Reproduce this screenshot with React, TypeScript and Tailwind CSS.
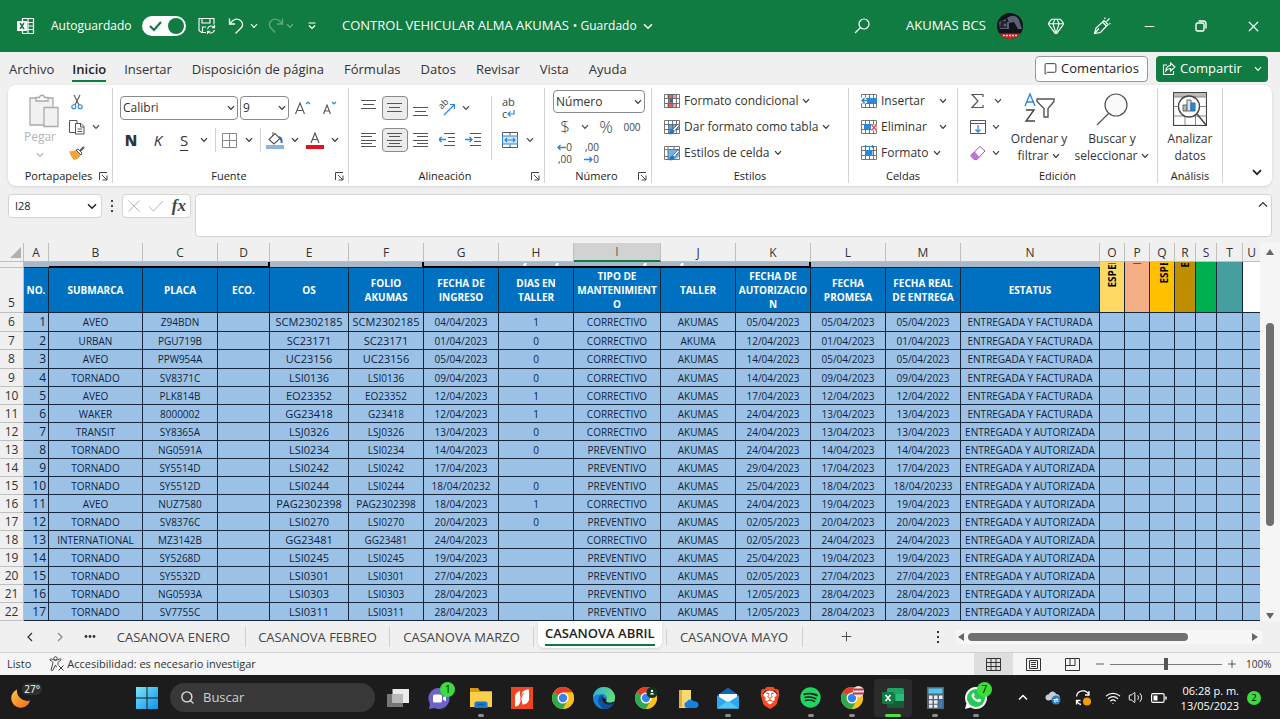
import React from "react";
import {
  Gem,
  Search,
  Wifi,
  Volume2,
  X,
  Minus,
  Plus,
  MessageSquare,
} from "lucide-react";
import { SiBrave } from "react-icons/si";
import { FaSpotify } from "react-icons/fa";

type Kids = { children?: React.ReactNode };

function Chev({ className = "" }: { className?: string }) {
  return (
    <svg viewBox="0 0 8 6" className={`h-1.5 w-2 shrink-0 ${className}`} fill="none" stroke="currentColor" strokeWidth="1.2">
      <path d="M1 1.2 4 4.4 7 1.2" />
    </svg>
  );
}

function Btn({ label, className = "", children }: Kids & { label: string; className?: string }) {
  return (
    <button type="button" aria-label={label} className={`flex shrink-0 items-center justify-center ${className}`}>
      {children}
    </button>
  );
}

/* ---------- title bar ---------- */

function TitleBar() {
  return (
    <header className="flex h-[52px] items-center bg-[#107c41] text-[12px] text-white">
      <svg viewBox="0 0 18 18" className="ml-[17px] size-[18px] shrink-0" fill="none" stroke="#fff">
        <path d="M5.5 4V1.5h11v15h-11V14M11 1.5v15M5.5 5.5h11M11 9h5.5M5.5 12.5h11" strokeWidth="1.2" />
        <rect x="0" y="4" width="10" height="10" fill="#fff" stroke="none" />
        <path d="m3 6 4 6M7 6l-4 6" stroke="#107c41" strokeWidth="1.5" />
      </svg>
      <label htmlFor="autosave" className="ml-4 w-[91px] whitespace-nowrap">Autoguardado</label>
      <span className="relative h-5 w-11 shrink-0 rounded-full bg-white">
        <input id="autosave" type="checkbox" defaultChecked className="absolute inset-0 m-0 size-full cursor-pointer appearance-none rounded-full" />
        <svg viewBox="0 0 44 20" className="pointer-events-none absolute inset-0 h-5 w-11" fill="none">
          <path d="m8 10 4 4 7-8" stroke="#107c41" strokeWidth="2.2" />
          <circle cx="34" cy="10" r="8" fill="#107c41" />
        </svg>
      </span>
      <Btn label="Guardar" className="ml-3 w-[18px]">
        <svg viewBox="0 0 18 18" className="size-[18px]" fill="none" stroke="#fff" strokeWidth="1.1">
          <path d="M8 15.5H3.500L1 13.500V1.500h15v6M4 1.500V6h8V1.500M4.500 15.500V10H8" />
          <path d="M9.500 12a4 4 0 0 1 7-1.500M16.500 8v2.800h-2.800M16.500 13a4 4 0 0 1-7 1.500M9.500 17v-2.800h2.800" />
        </svg>
      </Btn>
      <Btn label="Deshacer" className="ml-3 w-4">
        <svg viewBox="0 0 16 18" className="h-[18px] w-4" fill="none" stroke="#fff" strokeWidth="1.3">
          <path d="M1.500 1.500V7H7M1.800 6.800C6 1.500 10 1.600 12.500 3.500c2.800 2.200 2.500 5.500.5 7.500l-5.500 5.500" />
        </svg>
      </Btn>
      <Btn label="Opciones de deshacer" className="ml-1 w-3"><Chev /></Btn>
      <Btn label="Rehacer" className="ml-2 w-4 opacity-35">
        <svg viewBox="0 0 16 18" className="h-[18px] w-4" fill="none" stroke="#fff" strokeWidth="1.3">
          <path d="M14.500 1.500V7H9M14.200 6.800C10 1.500 6 1.600 3.500 3.500.7 5.700 1 9 3 11l4 4.500" />
        </svg>
      </Btn>
      <Btn label="Opciones de rehacer" className="w-3 opacity-40"><Chev /></Btn>
      <Btn label="Personalizar barra" className="ml-1.5 w-5">
        <svg viewBox="0 0 10 8" className="h-2 w-2.5" fill="none" stroke="#fff" strokeWidth="1.2">
          <path d="M1.500 1h7M2 3.500l3 3 3-3" />
        </svg>
      </Btn>
      <button type="button" className="ml-5 flex items-center whitespace-nowrap">
        <span className="text-[13px]">CONTROL VEHICULAR ALMA AKUMAS</span>
        <span className="ml-1">• Guardado</span>
        <svg viewBox="0 0 10 7" className="ml-1.5 h-[7px] w-2.5" fill="none" stroke="currentColor" strokeWidth="1.6"><path d="M1 1.200 5 5.200 9 1.200" /></svg>
      </button>
      <div className="ml-auto flex items-center">
        <Btn label="Buscar" className="w-4">
          <svg viewBox="0 0 16 16" className="size-4" fill="none" stroke="#fff" strokeWidth="1.2">
            <circle cx="10" cy="6" r="5" /><path d="M6.300 9.800 1 15" />
          </svg>
        </Btn>
        <span className="ml-9 w-[91px] whitespace-nowrap text-[13px]">AKUMAS BCS</span>
        <svg viewBox="0 0 26 26" className="size-[26px]">
          <defs><clipPath id="av"><circle cx="13" cy="13" r="13" /></clipPath></defs>
          <g clipPath="url(#av)">
            <rect width="26" height="26" fill="#11131c" />
            <path d="M2 9 9 6v3h3v7H3zM10 5c6-4 10-2 12 2l3 9h-4l-4-7-5 1z" fill="#5d5f73" />
            <path d="M4 8h6v7H3z" fill="#23242f" />
            <circle cx="8" cy="12" r="1.500" fill="#5d5f73" />
            <rect y="20.500" width="26" height="6" fill="#c4262b" />
            <path d="M6 22.500h14" stroke="#f4d9d9" strokeWidth="1.500" strokeDasharray="2 1" />
          </g>
        </svg>
        <Btn label="Premium" className="ml-6 w-[18px]"><Gem size={18} strokeWidth={1.5} /></Btn>
        <Btn label="Dibujar" className="ml-7 w-[18px]">
          <svg viewBox="0 0 18 18" className="size-[18px]" fill="none" stroke="#fff" strokeWidth="1.2">
            <path d="M1.500 16.500 3 11l6.500-6 4 4-6 6.500zM1.500 16.500l4.500-5M9.500 5l1.500-1.500 4 4L13.500 9M11.500 2l.8-1.500M13.500 4.500l3-3M16 7l1.500-.5" />
          </svg>
        </Btn>
        <Btn label="Minimizar" className="ml-[26px] w-6"><Minus size={15} strokeWidth={1.6} /></Btn>
        <Btn label="Restaurar" className="ml-7 w-6">
          <svg viewBox="0 0 12 12" className="size-3" fill="none" stroke="#fff" strokeWidth="1.4">
            <rect x="1" y="3" width="8" height="8" rx="1.500" /><path d="M3.500 1h5A2.500 2.500 0 0 1 11 3.500v5" />
          </svg>
        </Btn>
        <Btn label="Cerrar" className="ml-7 mr-[15px] w-6"><X size={17} strokeWidth={1.7} /></Btn>
      </div>
    </header>
  );
}

/* ---------- ribbon tabs ---------- */

function RibbonTabs() {
  const tabs = ["Archivo", "Inicio", "Insertar", "Disposición de página", "Fórmulas", "Datos", "Revisar", "Vista", "Ayuda"];
  return (
    <nav className="flex h-[33px] items-center bg-[#f0f0f0] pl-[9px] pr-3 text-[13px] text-[#333]">
      <div className="flex items-center gap-5 pt-px">
        {tabs.map((t) =>
          t === "Inicio" ? (
            <a key={t} href="#inicio" className="-mx-0.5 border-b-2 border-[#107c41] pt-0.5 font-semibold leading-[22px] text-[#222]">{t}</a>
          ) : (
            <a key={t} href={`#${t}`} className="whitespace-nowrap leading-[22px]">{t}</a>
          ),
        )}
      </div>
      <div className="ml-auto flex gap-2">
        <button type="button" className="flex h-[26px] w-[113px] items-center justify-center gap-1 rounded border border-[#999] bg-white text-[#222]">
          <MessageSquare size={13} strokeWidth={1.6} />Comentarios
        </button>
        <button type="button" className="flex h-[26px] w-28 items-center rounded bg-[#107c41] pl-1.5 text-white">
          <svg viewBox="0 0 14 14" className="mr-1 size-3.5" fill="none" stroke="#fff" strokeWidth="1.1">
            <path d="M5 3H1.500v9.500h10V9M8.500 1l4.500 4-4.500 4V6.500C6 6.500 4.800 7.500 3.800 9c.2-3 1.700-5.300 4.700-5.500z" />
          </svg>
          Compartir
          <Chev className="ml-auto mr-1.5" />
        </button>
      </div>
    </nav>
  );
}

/* ---------- ribbon ---------- */

function Group({ label, width, launcher, children }: Kids & { label: string; width: string; launcher?: boolean }) {
  return (
    <section aria-label={label} className={`my-[3px] flex shrink-0 flex-col border-r border-[#d4d4d4] ${width}`}>
      <div className="min-h-0 flex-1">{children}</div>
      <div className="flex h-3.5 items-center">
        <span className={`flex-1 text-center text-[11px] leading-3 text-[#222] ${launcher ? "pl-3" : ""}`}>{label}</span>
        {launcher && (
          <Btn label={`Más opciones de ${label}`} className="mr-[3px] w-3">
            <svg viewBox="0 0 9 9" className="size-[9px]" fill="none" stroke="#444" strokeWidth="1"><path d="M.5 8V.5H8M3 3l5 5M8 3.500V8H3.500" /></svg>
          </Btn>
        )}
      </div>
    </section>
  );
}

function Sep({ className = "h-6" }: { className?: string }) {
  return <span className={`w-px shrink-0 bg-[#d4d4d4] ${className}`} />;
}

function Lines({ rows }: { rows: [number, number, number][] }) {
  return (
    <svg viewBox="0 0 16 16" className="size-4" stroke="#555" strokeWidth="1">
      {rows.map(([y, a, b]) => <path key={y} d={`M${a} ${y}.5H${b}`} />)}
    </svg>
  );
}

function Picker({ label, value, options, className }: { label: string; value: string; options: string[]; className: string }) {
  return (
    <span className={`relative flex shrink-0 items-center rounded border border-[#8a8a8a] bg-white ${className}`}>
      <select aria-label={label} defaultValue={value} className="h-full w-full appearance-none bg-transparent pl-0.5 text-[12px] leading-4 text-[#333] outline-none">
        {options.map((o) => <option key={o}>{o}</option>)}
      </select>
      <Chev className="pointer-events-none absolute right-0.5 text-[#333]" />
    </span>
  );
}

function GridIcon({ kind }: { kind: "cond" | "table" | "cell" | "insert" | "delete" | "format" }) {
  const styled = kind === "table" || kind === "cell";
  return (
    <svg viewBox="0 0 16 16" className="size-4 shrink-0" fill="none">
      {kind === "cond" && <path d="M3.500 1h5v4.500h-5zM3.500 10h5v5h-5zM5 5.500h3.500V10H5z" fill="#f0585c" />}
      {kind === "cond" && <path d="M8.500 1h4v4.500h-4zM8.500 10h4v5h-4z" fill="#f59b9b" />}
      {kind === "table" && <path d="M5 5h10v6H5zM5 11h4v4H5z" fill="#5aa9e6" />}
      {kind === "cell" && <path d="M4 4.500h11v7l-4 3H4z" fill="#6cb4ea" />}
      {kind === "cell" ? (
        <path d="M.5 1.500h15v13H.5zM.5 4.500h15M4 1.500v13M.5 11.500H4M10 1.500v3" stroke="#666" strokeWidth=".9" />
      ) : (
        <path d="M.5 1.500h15v13H.5zM.5 5.500h15M.5 10.500h15M4.500 1.500v13M8.500 1.500v13M12.500 1.500v13" stroke="#666" strokeWidth=".9" />
      )}
      {kind === "cond" && <path d="M6 7.500h3" stroke="#2b6cb0" strokeWidth="3" />}
      {kind === "insert" && <><path d="M6 5h10v5H6z" fill="#2b88d8" /><path d="M0 4.500h5v6H0z" fill="#fff" /><path d="M7 7.500H1M3.500 5 1 7.500 3.500 10" stroke="#2b88d8" strokeWidth="1.4" /></>}
      {kind === "delete" && <><path d="M3 5h7v5H3z" fill="#2b88d8" /><path d="M10.500 5.500h5v6h-5z" fill="#fff" /><path d="m10.500 5.500 5 6M15.500 5.500l-5 6" stroke="#e8484e" strokeWidth="1.2" /></>}
      {kind === "format" && <><path d="M4.500 5h7v6h-7z" fill="#2b88d8" /><path d="M4.500 0v3M11.500 0v3M4.500 1.500h7" stroke="#2b88d8" strokeWidth="1.2" /></>}
      {styled && (
        <><path d="M16 5.500 10.500 12 8.500 10.500 14 5z" fill="#fff" stroke="#555" strokeWidth=".8" /><path d="M8.500 10.500c-2 .3-2.500 1.500-2.700 2.800L4.500 15c2.500.8 5.500.2 6-3z" fill="#1f78c8" /></>
      )}
    </svg>
  );
}

function TextBtn({ kind, text, far }: { kind: React.ComponentProps<typeof GridIcon>["kind"]; text: string; far?: boolean }) {
  return (
    <button type="button" className="flex h-[26px] items-center whitespace-nowrap text-[12px] text-[#333]">
      <GridIcon kind={kind} />
      <span className={`ml-1 ${far ? "w-[54px] text-left" : ""}`}>{text}</span>
      <Chev className="ml-1" />
    </button>
  );
}

function Ribbon() {
  const left: [number, number, number][] = [[1, 0, 15], [4, 0, 11], [8, 0, 15], [11, 0, 11], [14, 0, 15]];
  const center: [number, number, number][] = [[1, 0, 15], [4, 2, 13], [8, 0, 15], [11, 2, 13], [14, 0, 15]];
  const right: [number, number, number][] = [[1, 0, 15], [4, 4, 15], [8, 0, 15], [11, 4, 15], [14, 0, 15]];
  return (
    <div className="mx-2 flex h-[101px] rounded-lg bg-white text-[#444] shadow-sm">
      <Group label="Portapapeles" width="w-[105px]" launcher>
        <div className="flex pt-1.5">
          <button type="button" className="ml-3 flex w-10 flex-col items-center text-[12px] text-[#b5b5b5]">
            <svg viewBox="0 0 31 34" className="ml-1.5 h-[34px] w-[31px]" fill="#f1f1f1" stroke="#ababab" strokeWidth="1.3">
              <path d="M2 4h23v27H2z" /><path d="M8 7V3.500h3.500c.5-3 4.500-3 5 0H20V7z" fill="#fff" /><path d="M16 13.500h14v19H16z" />
            </svg>
            <span className="leading-[18px]">Pegar</span>
            <Chev className="mt-1.5" />
          </button>
          <div className="ml-2 flex flex-col">
            <Btn label="Cortar" className="h-4 w-[18px]">
              <svg viewBox="0 0 12 16" className="h-4 w-3" fill="none" strokeWidth="1.1"><path d="M3 1l5 10M9 1 4 11" stroke="#555" /><circle cx="2.800" cy="12.800" r="2" stroke="#2b88d8" /><circle cx="9.200" cy="12.800" r="2" stroke="#2b88d8" /></svg>
            </Btn>
            <div className="mt-2 flex items-center">
              <Btn label="Copiar" className="h-[18px] w-[18px]">
                <svg viewBox="0 0 16 16" className="size-4" fill="#fff" stroke="#555"><path d="M6 13.500H.5v-12H8V4" /><path d="M6.500 4.500H12l3 3v7.500H6.500zM11.500 4.500V8H15M8.500 10h4.500M8.500 12.500h4.500" /></svg>
              </Btn>
              <Btn label="Opciones de copiar" className="ml-0.5 w-4"><Chev /></Btn>
            </div>
            <Btn label="Copiar formato" className="mt-2 h-[18px] w-[18px]">
              <svg viewBox="0 0 16 14" className="h-3.5 w-4"><path d="M0 5c3 1 5-.5 7-1l5 5c-2 3-4 4.500-7 5-2-2-4-5-5-9z" fill="#f2a33a" /><path d="m7 4 2-1 4 4-1 2z" fill="#fff" stroke="#555" /><path d="m11 5 4-4" stroke="#555" strokeWidth="2" /></svg>
            </Btn>
          </div>
        </div>
      </Group>

      <Group label="Fuente" width="w-[236px]" launcher>
        <div className="flex h-8 items-center pl-[7px] pt-2">
          <Picker label="Fuente" value="Calibri" options={["Calibri", "Arial"]} className="h-6 w-[118px]" />
          <Picker label="Tamaño" value="9" options={["9", "10", "11"]} className="ml-0.5 h-6 w-[49px]" />
          <Btn label="Aumentar tamaño" className="w-7">
            <svg viewBox="0 0 18 16" className="h-4 w-[18px]" fill="none"><path d="M1.500 14 6 3l4.500 11M3 10.500h6" stroke="#555" strokeWidth="1.1" /><path d="m12 4 2-2 2 2" stroke="#2b88d8" strokeWidth="1.2" /></svg>
          </Btn>
          <Btn label="Reducir tamaño" className="w-[26px]">
            <svg viewBox="0 0 18 16" className="h-4 w-[18px]" fill="none"><path d="M2.500 14 6 5l3.500 9M4 11h4" stroke="#555" strokeWidth="1.1" /><path d="m11 2 2 2 2-2" stroke="#2b88d8" strokeWidth="1.2" /></svg>
          </Btn>
        </div>
        <div className="mt-2 flex h-6 items-center pl-1 text-[15px] text-[#333]">
          <Btn label="Negrita" className="w-7 font-extrabold">N</Btn>
          <Btn label="Cursiva" className="w-[26px] italic">K</Btn>
          <Btn label="Subrayado" className="w-[26px] underline underline-offset-4">S</Btn>
          <Btn label="Opciones de subrayado" className="w-[14px]"><Chev /></Btn>
          <Sep className="mx-1 h-6" />
          <Btn label="Bordes" className="w-[18px]">
            <svg viewBox="0 0 15 15" className="size-[15px]" fill="none" stroke="#888"><path d="M.5.5h14v14H.5zM7.500.5v14M.5 7.500h14" /></svg>
          </Btn>
          <Btn label="Opciones de bordes" className="w-[22px]"><Chev /></Btn>
          <Sep className="mr-1 h-6" />
          <Btn label="Color de relleno" className="w-[20px]">
            <svg viewBox="0 0 18 18" className="size-[18px]" fill="none"><path d="M3 8.500 9 2.500l5 5-6 5.500z" stroke="#555" strokeWidth="1.1" /><path d="M7 5V1" stroke="#555" /><path d="M13 6c2 1 3 3 2.500 6" stroke="#2b6cb0" strokeWidth="2" /><path d="M0 14h18v4H0z" fill="#8eb4dc" /></svg>
          </Btn>
          <Btn label="Opciones de relleno" className="w-5"><Chev /></Btn>
          <Btn label="Color de fuente" className="w-5">
            <svg viewBox="0 0 18 18" className="size-[18px]" fill="none"><path d="M5 12 9 2l4 10M6.500 8.500h5" stroke="#555" strokeWidth="1.2" /><path d="M0 14h18v4H0z" fill="#e3131b" /></svg>
          </Btn>
          <Btn label="Opciones de color" className="w-5"><Chev /></Btn>
        </div>
      </Group>

      <Group label="Alineación" width="w-[196px]" launcher>
        <div className="flex pl-[7px] pt-2">
          <div className="w-[135px]">
            <div className="flex h-6 items-center">
              <Btn label="Alinear arriba" className="w-[26px]"><Lines rows={[[0, 0, 15], [4, 2, 13], [8, 0, 15]]} /></Btn>
              <Btn label="Alinear en medio" className="h-6 w-[26px] rounded border border-[#8a8a8a] bg-[#ececec]"><Lines rows={[[3, 0, 15], [7, 2, 13], [11, 0, 15]]} /></Btn>
              <Btn label="Alinear abajo" className="w-[26px]"><Lines rows={[[7, 0, 15], [11, 2, 13], [15, 0, 15]]} /></Btn>
              <Btn label="Orientación" className="relative h-5 w-[26px]">
                <span className="absolute left-1 top-0 -rotate-45 text-[9px] leading-3">ab</span>
                <svg viewBox="0 0 16 16" className="size-4" fill="none"><path d="M5 15 15 5M11 4.500h4.500V9" stroke="#2b88d8" strokeWidth="1.2" /></svg>
              </Btn>
              <Btn label="Opciones de orientación" className="w-3"><Chev /></Btn>
            </div>
            <div className="mt-2 flex h-6 items-center">
              <Btn label="Alinear a la izquierda" className="w-[26px]"><Lines rows={left} /></Btn>
              <Btn label="Centrar" className="h-6 w-[26px] rounded border border-[#8a8a8a] bg-[#ececec]"><Lines rows={center} /></Btn>
              <Btn label="Alinear a la derecha" className="w-[26px]"><Lines rows={right} /></Btn>
              {[0, 1].map((i) => (
                <Btn key={i} label={i ? "Aumentar sangría" : "Disminuir sangría"} className="w-[26px]">
                  <svg viewBox="0 0 16 16" className="size-4" fill="none"><path d="M5 1.500h11M9 5.500h7M9 9.500h7M5 13.500h11" stroke="#555" /><path d={i ? "M0 7.500h7M4.500 5 7 7.500 4.500 10" : "M7 7.500H0M2.500 5 0 7.500 2.500 10"} stroke="#2b88d8" strokeWidth="1.3" /></svg>
                </Btn>
              ))}
            </div>
          </div>
          <Sep className="h-16" />
          <div className="pl-2">
            <Btn label="Ajustar texto" className="h-6 w-5 flex-col">
              <span className="w-4 text-left text-[11px] leading-3">ab</span>
              <span className="flex w-4 items-center text-[11px] leading-3">c
                <svg viewBox="0 0 8 9" className="h-[9px] w-2" fill="none"><path d="M7 0v4H1M3.500 1.500 1 4l2.500 2.500" stroke="#2b88d8" strokeWidth="1.2" /></svg>
              </span>
            </Btn>
            <div className="mt-2 flex h-6 items-center">
              <Btn label="Combinar y centrar" className="w-5">
                <svg viewBox="0 0 16 16" className="size-4" fill="none"><path d="M.5.5h15v15H.5zM8 .5v3M8 12.500v3" stroke="#555" /><path d="M.5 4h15v8H.5z" fill="#cfe6fa" stroke="#2b88d8" /><path d="M3 8h10M5 6 3 8l2 2M11 6l2 2-2 2" stroke="#2b88d8" strokeWidth="1.2" /></svg>
              </Btn>
              <Btn label="Opciones de combinar" className="w-5"><Chev /></Btn>
            </div>
          </div>
        </div>
      </Group>

      <Group label="Número" width="w-[107px]" launcher>
        <div className="pl-2 pt-0.5">
          <Picker label="Formato de número" value="Número" options={["Número", "General"]} className="h-[23px] w-[92px]" />
          <div className="mt-0.5 flex h-6 items-center text-[17px] font-light text-[#444]">
            <Btn label="Moneda" className="w-6">$</Btn>
            <Btn label="Opciones de moneda" className="w-4"><Chev /></Btn>
            <Btn label="Porcentaje" className="w-[26px]">%</Btn>
            <Btn label="Millares" className="w-[26px] text-[10px] font-normal">000</Btn>
          </div>
          <div className="mt-0.5 flex h-6 items-center gap-2 text-[10px]">
            <Btn label="Aumentar decimales" className="h-6 w-[19px] flex-col">
              <span className="flex w-full items-center justify-end leading-3">
                <svg viewBox="0 0 9 7" className="h-[7px] w-[9px]" fill="none"><path d="M9 3.500H1M3.500 1 1 3.500 3.500 6" stroke="#2b88d8" strokeWidth="1.3" /></svg>0
              </span>
              <span className="w-full text-right leading-3">,00</span>
            </Btn>
            <Btn label="Disminuir decimales" className="h-6 w-[19px] flex-col">
              <span className="w-full text-right leading-3">,00</span>
              <span className="flex w-full items-center justify-end leading-3">
                <svg viewBox="0 0 9 7" className="h-[7px] w-[9px]" fill="none"><path d="M0 3.500h8M5.500 1 8 3.500 5.500 6" stroke="#2b88d8" strokeWidth="1.3" /></svg>0
              </span>
            </Btn>
          </div>
        </div>
      </Group>

      <Group label="Estilos" width="w-[197px]">
        <div className="pl-3">
          <TextBtn kind="cond" text="Formato condicional" />
          <TextBtn kind="table" text="Dar formato como tabla" />
          <TextBtn kind="cell" text="Estilos de celda" />
        </div>
      </Group>

      <Group label="Celdas" width="w-[109px]">
        <div className="pl-3">
          <TextBtn kind="insert" text="Insertar" far />
          <TextBtn kind="delete" text="Eliminar" far />
          <TextBtn kind="format" text="Formato" />
        </div>
      </Group>

      <Group label="Edición" width="w-[200px]">
        <div className="flex">
          <div className="w-[46px] pl-3">
            <button type="button" aria-label="Autosuma" className="flex h-[26px] items-center">
              <svg viewBox="0 0 16 16" className="size-4" fill="none" stroke="#555" strokeWidth="1.2"><path d="M13 4V1.500H2L8 8l-6 6.500h11V12" /></svg><Chev className="ml-2" />
            </button>
            <button type="button" aria-label="Rellenar" className="flex h-[26px] items-center">
              <svg viewBox="0 0 16 16" className="size-4" fill="none" stroke="#555"><path d="M.5 1.500h15v13H.5zM.5 4.500h15" /><path d="M8 6v7M5.500 10.500 8 13l2.500-2.500" stroke="#2b88d8" strokeWidth="1.3" /></svg><Chev className="ml-1.5" />
            </button>
            <button type="button" aria-label="Borrar" className="flex h-[26px] items-center">
              <svg viewBox="0 0 16 16" className="size-4" fill="none"><path d="M1 10 10 1.500l5 4.500-8 8.500H4.500L1 11.500z" fill="#fff" stroke="#a04fb5" /><path d="M1 10 4.500 6.500l5 5.500L7 14.500H4.500L1 11.500z" fill="#c274d4" /></svg><Chev className="ml-1.5" />
            </button>
          </div>
          <button type="button" className="flex w-[70px] flex-col items-center pt-1 text-[12px] leading-[17px] text-[#333]">
            <svg viewBox="0 0 34 34" className="h-[34px] w-[34px]" fill="none" strokeWidth="1.400"><path d="M3 14 8 2l5 12M5 10h6" stroke="#2b88d8" /><path d="M4 18h8L4 29h9" stroke="#444" /><path d="M15 7h17v2.500l-6 7V25h-4v-8.500l-7-7z" stroke="#555" /></svg>
            <span className="mt-1 whitespace-nowrap">Ordenar y</span>
            <span className="flex items-center">filtrar <Chev className="ml-1" /></span>
          </button>
          <button type="button" className="flex w-[76px] flex-col items-center pt-1 text-[12px] leading-[17px] text-[#333]">
            <svg viewBox="0 0 34 34" className="h-[34px] w-[34px]" fill="none" stroke="#555" strokeWidth="1.2"><circle cx="21" cy="13" r="11" fill="#fafafa" /><path d="M13.500 21.500 2 33" /></svg>
            <span className="mt-1 whitespace-nowrap">Buscar y</span>
            <span className="flex items-center">seleccionar <Chev className="ml-1" /></span>
          </button>
        </div>
      </Group>

      <Group label="Análisis" width="w-[65px]">
        <button type="button" className="flex w-full flex-col items-center pt-1 text-[12px] leading-[17px] text-[#333]">
          <svg viewBox="0 0 34 34" className="h-[34px] w-[34px]" fill="none" stroke="#444">
            <rect x=".5" y=".5" width="33" height="33" fill="#fff" strokeWidth="1.2" /><path d="M1 1h32v4H1z" fill="#bbb" stroke="none" /><path d="M.5 5h33M.5 14.500h33M.5 24h33M12 5v28M22.500 5v28" stroke="#888" />
            <circle cx="16" cy="14.500" r="10.500" fill="#fff" strokeWidth="1.3" /><path d="M10 13h4v6h-4z" fill="#b5b5b5" stroke="#666" /><path d="M14 8h4v11h-4z" fill="#cfe6fa" stroke="#666" /><path d="M18 11h4v8h-4z" fill="#2b88d8" stroke="#2b6cb0" /><path d="m24 22 9 11" strokeWidth="1.500" />
          </svg>
          <span className="mt-1">Analizar</span>
          <span>datos</span>
        </button>
      </Group>
      <Btn label="Contraer cinta" className="mb-2.5 ml-auto mr-2.5 self-end text-[#222]">
        <svg viewBox="0 0 10 7" className="h-[7px] w-2.5" fill="none" stroke="currentColor" strokeWidth="1.700"><path d="M1 1.200 5 5.200 9 1.200" /></svg>
      </Btn>
    </div>
  );
}

/* ---------- formula bar ---------- */

function FormulaBar() {
  return (
    <div className="mx-2 mb-1.5 mt-2 flex h-[43px] items-start">
      <label className="flex h-6 w-[94px] items-center rounded border border-[#d4d4d4] bg-white pr-1">
        <input aria-label="Cuadro de nombres" defaultValue="I28" className="w-full min-w-0 bg-transparent pl-1.5 text-[11px] text-[#222] outline-none" />
        <svg viewBox="0 0 10 7" className="h-[7px] w-2.5 shrink-0" fill="none" stroke="#222" strokeWidth="1.5"><path d="M1 1.200 5 5.200 9 1.200" /></svg>
      </label>
      <svg viewBox="0 0 4 12" className="mx-2 mt-1.5 h-3 w-1" fill="#444"><rect x="1" width="2" height="2" /><rect x="1" y="5" width="2" height="2" /><rect x="1" y="10" width="2" height="2" /></svg>
      <div className="flex h-6 w-[69px] items-center justify-between rounded border border-[#d4d4d4] bg-white px-1">
        <Btn label="Cancelar"><svg viewBox="0 0 14 14" className="size-3.5" fill="none" stroke="#b5b5b5"><path d="m1.500 1.500 11 11M12.500 1.500l-11 11" /></svg></Btn>
        <Btn label="Introducir"><svg viewBox="0 0 16 12" className="h-3 w-4" fill="none" stroke="#b5b5b5"><path d="m1 6.500 4.500 4.500L15 1" /></svg></Btn>
        <Btn label="Insertar función" className="font-['Liberation_Serif',serif] text-[17px] font-bold italic leading-5 text-[#444]">fx</Btn>
      </div>
      <label className="ml-1 flex h-[43px] flex-1 items-start rounded border border-[#d4d4d4] bg-white">
        <textarea aria-label="Barra de fórmulas" className="h-full flex-1 resize-none bg-transparent px-2 outline-none" />
        <svg viewBox="0 0 10 7" className="mr-[3px] mt-1.5 h-[7px] w-2.5" fill="none" stroke="#333" strokeWidth="1.200"><path d="M1 5.500 5 1.500 9 5.500" /></svg>
      </label>
    </div>
  );
}

/* ---------- sheet ---------- */

const letters = "ABCDEFGHIJKLMNOPQRSTU".split("");

const heads = [
  ["NO."], ["SUBMARCA"], ["PLACA"], ["ECO."], ["OS"], ["FOLIO", "AKUMAS"], ["FECHA DE", "INGRESO"], ["DIAS EN", "TALLER"],
  ["TIPO DE", "MANTENIMIENT", "O"], ["TALLER"], ["FECHA DE", "AUTORIZACIO", "N"], ["FECHA", "PROMESA"], ["FECHA REAL", "DE ENTREGA"], ["ESTATUS"],
];

const C = "CORRECTIVO";
const P = "PREVENTIVO";
const F = "ENTREGADA Y FACTURADA";
const A = "ENTREGADA Y AUTORIZADA";

const rows: string[][] = [
  ["1", "AVEO", "Z94BDN", "", "SCM2302185", "SCM2302185", "04/04/2023", "1", C, "AKUMAS", "05/04/2023", "05/04/2023", "05/04/2023", F],
  ["2", "URBAN", "PGU719B", "", "SC23171", "SC23171", "01/04/2023", "0", C, "AKUMA", "12/04/2023", "01/04/2023", "01/04/2023", F],
  ["3", "AVEO", "PPW954A", "", "UC23156", "UC23156", "05/04/2023", "0", C, "AKUMAS", "14/04/2023", "05/04/2023", "05/04/2023", F],
  ["4", "TORNADO", "SV8371C", "", "LSI0136", "LSI0136", "09/04/2023", "0", C, "AKUMAS", "14/04/2023", "09/04/2023", "09/04/2023", F],
  ["5", "AVEO", "PLK814B", "", "EO23352", "EO23352", "12/04/2023", "1", C, "AKUMAS", "17/04/2023", "12/04/2023", "12/04/2022", F],
  ["6", "WAKER", "8000002", "", "GG23418", "G23418", "12/04/2023", "1", C, "AKUMAS", "24/04/2023", "13/04/2023", "13/04/2023", F],
  ["7", "TRANSIT", "SY8365A", "", "LSJ0326", "LSJ0326", "13/04/2023", "0", C, "AKUMAS", "24/04/2023", "13/04/2023", "13/04/2023", A],
  ["8", "TORNADO", "NG0591A", "", "LSI0234", "LSI0234", "14/04/2023", "0", P, "AKUMAS", "24/04/2023", "14/04/2023", "14/04/2023", A],
  ["9", "TORNADO", "SY5514D", "", "LSI0242", "LSI0242", "17/04/2023", "", P, "AKUMAS", "29/04/2023", "17/04/2023", "17/04/2023", A],
  ["10", "TORNADO", "SY5512D", "", "LSI0244", "LSI0244", "18/04/20232", "0", P, "AKUMAS", "25/04/2023", "18/04/2023", "18/04/20233", A],
  ["11", "AVEO", "NUZ7580", "", "PAG2302398", "PAG2302398", "18/04/2023", "1", C, "AKUMAS", "24/04/2023", "19/04/2023", "19/04/2023", A],
  ["12", "TORNADO", "SV8376C", "", "LSI0270", "LSI0270", "20/04/2023", "0", P, "AKUMAS", "02/05/2023", "20/04/2023", "20/04/2023", A],
  ["13", "INTERNATIONAL", "MZ3142B", "", "GG23481", "GG23481", "24/04/2023", "", C, "AKUMAS", "02/05/2023", "24/04/2023", "24/04/2023", A],
  ["14", "TORNADO", "SY5268D", "", "LSI0245", "LSI0245", "19/04/2023", "", P, "AKUMAS", "25/04/2023", "19/04/2023", "19/04/2023", A],
  ["15", "TORNADO", "SY5532D", "", "LSI0301", "LSI0301", "27/04/2023", "", P, "AKUMAS", "02/05/2023", "27/04/2023", "27/04/2023", A],
  ["16", "TORNADO", "NG0593A", "", "LSI0303", "LSI0303", "28/04/2023", "", P, "AKUMAS", "12/05/2023", "28/04/2023", "28/04/2023", A],
  ["17", "TORNADO", "SV7755C", "", "LSI0311", "LSI0311", "28/04/2023", "", P, "AKUMAS", "12/05/2023", "28/04/2023", "28/04/2023", A],
];

const colWidths = [
  "w-6", "w-[25px]", "w-[94px]", "w-[75px]", "w-[52px]", "w-[79px]", "w-[75px]", "w-[75px]", "w-[75px]", "w-[87px]", "w-[75px]",
  "w-[75px]", "w-[75px]", "w-[75px]", "w-[139px]", "w-[25px]", "w-[25px]", "w-[25px]", "w-[21px]", "w-[21px]", "w-[26px]",
];

const colored = [
  { bg: "bg-[#ffd966]", text: "ESPERA", pad: "pb-6" },
  { bg: "bg-[#f4b084]", text: "D", pad: "pb-[47px]" },
  { bg: "bg-[#ffc000]", text: "ESPERA", pad: "pb-7 pl-1" },
  { bg: "bg-[#bf8f00]", text: "EN", pad: "pb-11" },
  { bg: "bg-[#00b050]", text: "", pad: "" },
  { bg: "bg-[#459f9f]", text: "", pad: "" },
];

function stripBorder(i: number) {
  if ((i >= 1 && i <= 3) || (i >= 6 && i <= 10)) return i === 3 || i === 10 ? "border-b-2 border-r-2 border-black" : "border-b-2 border-black";
  if (i === 5) return "border-r-2 border-r-black border-b border-b-[#17263a]";
  return "border-b border-[#17263a]";
}

function Sheet() {
  return (
    <main className="flex">
      <div className="min-w-0 flex-1 overflow-hidden">
        <table className="w-full table-fixed border-separate border-spacing-0 whitespace-nowrap text-[#10233c]">
          <colgroup>
            {colWidths.map((w, i) => <col key={i} className={w} />)}
            <col />
          </colgroup>
          <thead>
            <tr className="h-[19px] text-[12px] leading-[17px] text-[#333]">
              <th aria-label="Seleccionar todo" className="h-[19px] border-b border-r border-[#bfbfbf] p-0">
                <svg viewBox="0 0 11 11" className="ml-auto mr-0.5 size-[11px]" fill="#b0b0b0"><path d="M11 0v11H0z" /></svg>
              </th>
              {letters.map((l) => (
                <th key={l} className={`p-0 font-normal ${l === "I" ? "border-b-2 border-b-[#107c41] border-r border-r-[#bfbfbf] bg-[#d2d2d2] text-[#4b6b58]" : l === "U" ? "border-b border-[#bfbfbf]" : "border-b border-r border-[#bfbfbf]"}`}>{l}</th>
              ))}
            </tr>
          </thead>
          <tbody>
            <tr className="h-1.5">
              <td className="h-1.5 border-b border-r border-[#bfbfbf] p-0" />
              {heads.map((h, i) => <td key={i} className={`h-1.5 bg-[#a9b8c8] p-0 ${stripBorder(i)}`}>
                {(i === 7 || i === 8 || i === 9) && (
                  <svg viewBox="0 0 75 3" className="block h-[3px] w-full" stroke="#fff" strokeWidth="2.500"><path d={i === 7 ? "M27 0l-2 3M59 0l-2 3" : i === 8 ? "M66 0l-2 3" : "M22 0l-2 3"} /></svg>
                )}
              </td>)}
              {colored.map((c, i) => (
                <td key={i} rowSpan={2} className={`border-b border-r border-[#17263a] p-0 ${c.bg}`}>
                  <div className={`flex h-[49px] items-end justify-center overflow-hidden ${c.pad}`}>
                    <span className="rotate-180 text-[10px] font-bold leading-3 text-black [writing-mode:vertical-rl]">{c.text}</span>
                  </div>
                </td>
              ))}
              <td rowSpan={2} className="border-b border-[#17263a] bg-white p-0" />
            </tr>
            <tr className="h-[45px]">
              <th className="h-[45px] border-b border-r border-[#bfbfbf] p-0 align-bottom text-[12px] font-normal leading-[18px] text-[#333]">5</th>
              {heads.map((h, i) => (
                <th key={i} className="border-b border-r border-[#17263a] bg-[#0070c0] p-0 text-[10px] font-bold leading-[14px] text-white">
                  {h.map((line) => <div key={line}>{line}</div>)}
                </th>
              ))}
            </tr>
            {rows.map((r, n) => (
              <tr key={n} className={n === 0 || n === 2 ? "h-[19px]" : "h-[18px]"}>
                <th className="border-b border-r border-[#bfbfbf] p-0 text-[12px] font-normal leading-4 text-[#333]">{n + 6}</th>
                {r.map((v, i) => (
                  <td
                    key={i}
                    className={`border-b border-r border-[#17263a] bg-[#9bc2e6] p-0 leading-4 ${i === 0 ? "pr-0.5 text-right text-[12px]" : i === 4 || (i === 5 && n < 3) ? "text-center text-[11px]" : "text-center text-[10px]"}`}
                  >
                    {v}
                  </td>
                ))}
                {colored.map((_, i) => <td key={i} className="border-b border-r border-[#17263a] bg-[#9bc2e6] p-0" />)}
                <td className="border-b border-[#17263a] bg-[#9bc2e6] p-0" />
              </tr>
            ))}
          </tbody>
        </table>
      </div>
      <div className="flex w-5 flex-col items-center bg-[#f5f5f5] pb-0.5 pt-1.5">
        <Btn label="Desplazar arriba"><svg viewBox="0 0 8 6" className="h-1.5 w-2" fill="#666"><path d="M4 0l4 6H0z" /></svg></Btn>
        <div className="mt-[68px] h-[203px] w-2 rounded-full bg-[#707070]" />
        <Btn label="Desplazar abajo" className="mt-auto"><svg viewBox="0 0 8 6" className="h-1.5 w-2" fill="#666"><path d="M4 6l4-6H0z" /></svg></Btn>
      </div>
    </main>
  );
}

/* ---------- sheet tabs and status ---------- */

function SheetTab({ text, active }: { text: string; active?: boolean }) {
  return active ? (
    <button type="button" className="mx-1 flex h-[27px] items-start self-start whitespace-nowrap rounded-b-md bg-white px-[7px] pt-px text-[#222] shadow-sm">
      <span className="border-b-2 border-[#107c41] font-semibold leading-[22px]">{text}</span>
    </button>
  ) : (
    <button type="button" className="w-[144px] shrink-0 whitespace-nowrap border-r border-[#cfcfcf] leading-5">{text}</button>
  );
}

function SheetTabs() {
  return (
    <div className="flex h-[31px] items-center text-[12px] text-[#444]">
      <Btn label="Hoja anterior" className="ml-[22px] w-4"><svg viewBox="0 0 6 10" className="h-2.5 w-1.5" fill="none" stroke="#333" strokeWidth="1.200"><path d="M5 1 1 5l4 4" /></svg></Btn>
      <Btn label="Hoja siguiente" className="ml-3.5 w-4"><svg viewBox="0 0 6 10" className="h-2.5 w-1.5" fill="none" stroke="#888" strokeWidth="1.200"><path d="m1 1 4 4-4 4" /></svg></Btn>
      <Btn label="Más hojas" className="ml-3.5 w-4"><svg viewBox="0 0 12 3" className="h-[3px] w-3" fill="#333"><circle cx="2" cy="1.500" r="1.400" /><circle cx="6" cy="1.500" r="1.400" /><circle cx="10" cy="1.500" r="1.400" /></svg></Btn>
      <div className="ml-1 flex h-full items-center text-[13px]">
        <SheetTab text="CASANOVA ENERO" />
        <SheetTab text="CASANOVA FEBREO" />
        <SheetTab text="CASANOVA MARZO" />
        <SheetTab text="CASANOVA ABRIL" active />
        <span className="h-4 w-px bg-[#cfcfcf]" />
        <button type="button" className="w-[136px] shrink-0 whitespace-nowrap border-r border-[#cfcfcf] leading-5">CASANOVA MAYO</button>
      </div>
      <Btn label="Hoja nueva" className="ml-9 w-4"><Plus size={15} strokeWidth={1.5} /></Btn>
      <svg viewBox="0 0 4 12" className="ml-auto h-3 w-1 shrink-0" fill="#333"><rect x="1" width="2" height="2" /><rect x="1" y="5" width="2" height="2" /><rect x="1" y="10" width="2" height="2" /></svg>
      <div className="ml-4 mr-[18px] flex h-3.5 w-[306px] shrink-0 items-center rounded bg-[#f7f7f7]">
        <Btn label="Desplazar a la izquierda" className="ml-0.5"><svg viewBox="0 0 6 8" className="h-2 w-1.5" fill="#666"><path d="M6 0v8L0 4z" /></svg></Btn>
        <span className="ml-1 h-2 w-[220px] rounded-full bg-[#707070]" />
        <Btn label="Desplazar a la derecha" className="ml-auto mr-1"><svg viewBox="0 0 6 8" className="h-2 w-1.5" fill="#666"><path d="M0 0v8l6-4z" /></svg></Btn>
      </div>
    </div>
  );
}

function StatusBar() {
  return (
    <div className="flex h-[23px] items-center border-t border-[#d0d0d0] bg-[#f5f5f5] pl-[7px] text-[11px] text-[#333]">
      <span>Listo</span>
      <button type="button" className="ml-[18px] flex items-center whitespace-nowrap">
        <svg viewBox="0 0 16 16" className="mr-0.5 size-4" fill="none" stroke="#444"><circle cx="6.500" cy="2.500" r="1.700" /><path d="M1 4c2 1.500 3 1.500 3 3l-2 7c.5 1 1.500.8 2 0l2.500-5 1 2M12 4c-2 1.500-3 1.500-3 3v2M1 4c0-1.500 1-1.300 2-.8 2 1.200 5 1.200 7 0 1-.5 2-.7 2 .8M9.500 9.500l5 5M14.500 9.500l-5 5" /></svg>
        Accesibilidad: es necesario investigar
      </button>
      <div className="ml-auto flex h-full items-center">
        <Btn label="Vista normal" className="h-full w-[39px] bg-[#dedede]">
          <svg viewBox="0 0 15 13" className="h-[13px] w-[15px]" fill="none" stroke="#333"><path d="M.5.5h14v12H.5zM.5 4.500h14M.5 8.500h14M5 .5v12M10 .5v12" /></svg>
        </Btn>
        <Btn label="Diseño de página" className="h-full w-10">
          <svg viewBox="0 0 15 13" className="h-[13px] w-[15px]" fill="none" stroke="#333"><path d="M.5.5h14v12H.5zM3.500 2.500h8v8h-8zM5 4.500h5M5 6.500h5M5 8.500h5" /></svg>
        </Btn>
        <Btn label="Vista previa de salto" className="h-full w-[39px]">
          <svg viewBox="0 0 15 13" className="h-[13px] w-[15px]" fill="none" stroke="#333"><path d="M.5.5h14v12H.5zM5 .5v7M.5 7.500H10V.5" /></svg>
        </Btn>
        <Btn label="Alejar" className="ml-0.5 w-3"><Minus size={12} strokeWidth={1.6} /></Btn>
        <input
          type="range"
          aria-label="Zoom"
          defaultValue={50}
          className="mx-1 h-3 w-[112px] appearance-none bg-[linear-gradient(#777,#777)] bg-[length:100%_1px] bg-center bg-no-repeat [&::-webkit-slider-thumb]:h-3 [&::-webkit-slider-thumb]:w-1 [&::-webkit-slider-thumb]:appearance-none [&::-webkit-slider-thumb]:bg-[#555]"
        />
        <Btn label="Acercar" className="w-3"><Plus size={12} strokeWidth={1.6} /></Btn>
        <span className="ml-2 mr-1.5 w-7 whitespace-nowrap text-[10px]">100%</span>
      </div>
    </div>
  );
}

/* ---------- taskbar ---------- */

function Chrome({ extra }: { extra?: React.ReactNode }) {
  return (
    <svg viewBox="0 0 24 24" className="size-6">
      <circle cx="12" cy="12" r="11" fill="#fbc116" />
      <path d="M12 12 2.500 6.500A11 11 0 0 1 21.500 6.500H12z" fill="#e33b2e" />
      <path d="M2.500 6.500A11 11 0 0 0 12 23l4.700-8.200L12 12z" fill="#2da94f" />
      <path d="M12 6.500h9.500A11 11 0 0 1 12 23l4.800-8.200z" fill="#fbc116" />
      <circle cx="12" cy="12" r="5.500" fill="#fff" /><circle cx="12" cy="12" r="4.200" fill="#3b82f0" />
      {extra}
    </svg>
  );
}

function TaskIcon({ label, run, active, badge, children }: Kids & { label: string; run?: boolean; active?: boolean; badge?: string }) {
  return (
    <button type="button" aria-label={label} className={`relative flex h-[38px] w-[38px] items-center justify-center rounded ${active ? "bg-[#2b2b2b]" : ""}`}>
      {children}
      {badge && <span className="absolute right-[3px] top-[3px] flex size-[15px] items-center justify-center rounded-full bg-[#3bdc3b] text-[10px] leading-none text-black">{badge}</span>}
      {(run || active) && <span className={`absolute bottom-0 h-[3px] rounded-full ${active ? "w-4 bg-[#4be04b]" : "w-1.5 bg-[#8c8c8c]"}`} />}
    </button>
  );
}

function Taskbar() {
  return (
    <footer className="flex h-[45px] items-center bg-[#1c1c1c] text-white">
      <button type="button" aria-label="El tiempo" className="relative ml-2.5 flex h-[30px] w-[30px] shrink-0 items-center">
        <svg viewBox="0 0 22 22" className="size-[22px]">
          <defs><linearGradient id="moon" x1="0" y1="0" x2="1" y2="1"><stop offset="0" stopColor="#ffc243" /><stop offset="1" stopColor="#ee6a1f" /></linearGradient></defs>
          <path d="M7 2.500a9.500 9.500 0 1 0 13 11C13 15.500 6 9.500 7 2.500z" fill="url(#moon)" />
        </svg>
        <span className="absolute -right-0.5 top-0 rounded-full bg-[#303030] px-0.5 text-[10px] leading-3">27°</span>
      </button>
      <Btn label="Inicio" className="ml-24 w-[22px]">
        <svg viewBox="0 0 22 22" className="size-[22px]">
          <defs><linearGradient id="win" x1="0" y1="0" x2="1" y2="1"><stop offset="0" stopColor="#7ce4fb" /><stop offset="1" stopColor="#0f93ef" /></linearGradient></defs>
          <path d="M0 0h10.500v10.500H0zM11.500 0H22v10.500H11.500zM0 11.500h10.500V22H0zM11.500 11.500H22V22H11.500z" fill="url(#win)" />
        </svg>
      </Btn>
      <label className="ml-3 flex h-[29px] w-[205px] shrink-0 items-center rounded-full bg-[#383838] pl-2.5">
        <Search size={15} strokeWidth={2.2} className="shrink-0 text-[#ddd]" />
        <input aria-label="Buscar" placeholder="Buscar" className="ml-2 w-full min-w-0 bg-transparent text-[13px] outline-none placeholder:text-[#d0d0d0]" />
      </label>
      <div className="ml-1 flex w-[616px] shrink-0 justify-between">
        <TaskIcon label="Vista de tareas">
          <svg viewBox="0 0 24 24" className="size-6"><path d="M1 8h16v13H1z" fill="#767676" /><path d="M6.500 3H23v14H6.500z" fill="#ececec" /><path d="M6.500 8H17v9H6.500z" fill="#b9b9b9" /></svg>
        </TaskIcon>
        <TaskIcon label="Chat" badge="1">
          <svg viewBox="0 0 24 24" className="size-6"><path d="M12 2a10.500 10.500 0 1 1-4.500 20L2 23l1-5A10.500 10.500 0 0 1 12 2z" fill="#6d62c8" /><rect x="6" y="8.500" width="9" height="8" rx="1.500" fill="#fff" /><path d="m16 11.500 3-2v6l-3-2z" fill="#fff" /></svg>
        </TaskIcon>
        <TaskIcon label="Explorador" run>
          <svg viewBox="0 0 24 24" className="size-6"><path d="M1 2h8l2 3h12v7H1z" fill="#d99a16" /><path d="M1 6h22v15H1z" fill="#fbcf49" /><path d="M5.500 22v-4.500a2 2 0 0 1 2-2h9a2 2 0 0 1 2 2V22z" fill="#1b78d0" /><path d="M8.500 18.500h7" stroke="#0d5aa5" strokeWidth="1.500" /></svg>
        </TaskIcon>
        <TaskIcon label="Nitro">
          <svg viewBox="0 0 24 24" className="size-6"><path d="M1 1h22v22H1z" fill="#ee4522" /><path d="M5 20.500V10c.5-2.500 2.500-4.500 5-5v4.500l1.500 3.500V8.500c.5-3 3-5 7.500-5V14c-1 3-3.500 4.500-6.500 4.500l-1-4.500-1.500 2.500c-.5 2.500-2.500 4-5 4z" fill="#fff" /><path d="m13.500 7-3 5.500 1 3.500" fill="none" stroke="#ee4522" strokeWidth="1" /></svg>
        </TaskIcon>
        <TaskIcon label="Chrome"><Chrome /></TaskIcon>
        <TaskIcon label="Edge">
          <svg viewBox="0 0 24 24" className="size-6">
            <defs>
              <linearGradient id="edge" x1="0" y1="0" x2="1" y2=".4"><stop offset="0" stopColor="#29a8e8" /><stop offset="1" stopColor="#66dd72" /></linearGradient>
              <clipPath id="disc"><circle cx="12" cy="12" r="11" /></clipPath>
            </defs>
            <g clipPath="url(#disc)">
              <rect width="24" height="24" fill="#1583d6" />
              <path d="M10 8.500c-4 1.500-5 7-2 11 2 2.500 4 4 7 4L24 22v-6H14z" fill="#0f4f9c" />
              <path d="M10.500 11c-1 3 1 7.500 6.500 7.500 3 0 5-1 7-2.500v-2c-2 2-4.500 3-7 3-2.500-.2-3-1.500-2-3z" fill="#1c1c1c" />
              <path d="M0 13C0 4 6 0 12 0c8 0 13 5 12 11-.5 4-3 5.500-6 5.500-3.500 0-4.500-1.200-3.500-2.800C16 11 13.500 8 10 8 5.500 8 2 9 0 13z" fill="url(#edge)" />
            </g>
          </svg>
        </TaskIcon>
        <TaskIcon label="Chrome perfil"><Chrome extra={<g><circle cx="18" cy="6.500" r="5.500" fill="#12351f" /><circle cx="18" cy="5" r="1.200" fill="#fff" /><path d="M15.800 8.500c.5-2 4-2 4.400 0z" fill="#fff" /></g>} /></TaskIcon>
        <TaskIcon label="OneDrive carpeta">
          <svg viewBox="0 0 24 24" className="size-6"><path d="M4 4h12v17l-6 1H4z" fill="#f8d775" /><path d="M4 4h3v17H4z" fill="#dfae3c" /><path d="M12 22a3.200 3.200 0 0 1 0-6.300c1-2.700 5-3.200 6.500-.5 3-.3 5 1.500 5 3.500S22 22 20.500 22z" fill="#1682dd" /></svg>
        </TaskIcon>
        <TaskIcon label="Correo" run>
          <svg viewBox="0 0 24 24" className="size-6"><path d="M1 9.500 12 1.500l11 8v3H1z" fill="#1560b0" /><path d="M3 8h18v8H3z" fill="#f3f8fc" /><path d="M1 9.500l11 7 11-7v13H1z" fill="#2fa8ee" /><path d="M1 22.500 12 15l11 7.500z" fill="#55c8f8" /></svg>
        </TaskIcon>
        <TaskIcon label="Brave"><span className="flex size-6 items-center justify-center bg-[radial-gradient(circle,#fff_7px,transparent_8px)] text-[22px] text-[#fb4a1f]"><SiBrave /></span></TaskIcon>
        <TaskIcon label="Spotify" run><FaSpotify size={21} color="#1ed760" /></TaskIcon>
        <TaskIcon label="Chrome trabajo" run><Chrome extra={<g><circle cx="18.500" cy="5.500" r="5.500" fill="#e8e8e8" /><path d="M13.500 3.500h10M13 7.500h11" stroke="#c5303a" strokeWidth="1.800" /></g>} /></TaskIcon>
        <TaskIcon label="Excel" active>
          <svg viewBox="0 0 24 24" className="size-6"><rect x="6" y="2" width="17" height="20" rx="1.500" fill="#21a366" /><path d="M6 8h8.500v7H6z" fill="#107c41" /><path d="M14.500 8H23v7h-8.500z" fill="#33c481" opacity=".7" /><path d="M6 15h17v7H6z" fill="#185c37" /><rect x="1" y="6" width="12" height="12" rx="1" fill="#107c41" /><path d="m4.500 9 5 6M9.500 9l-5 6" stroke="#fff" strokeWidth="1.700" /></svg>
        </TaskIcon>
        <TaskIcon label="Calculadora" run>
          <svg viewBox="0 0 24 24" className="size-6"><path d="M4 1h17v22H4z" fill="#59636e" /><path d="M5.500 2.500h14v5h-14z" fill="#4fc8f0" /><path d="M6 9.500h3.500v3.500H6zM11 9.500h3.500v3.500H11zM6 14.200h3.500v3.500H6zM11 14.200h3.500v3.500H11zM6 18.800h3.500v3H6zM11 18.800h3.500v3H11zM16 9.500h3.500v3.500H16z" fill="#e8edf2" /><path d="M16 14.200h3.500v7.600H16z" fill="#2f80d8" /></svg>
        </TaskIcon>
        <TaskIcon label="WhatsApp" run badge="7">
          <svg viewBox="0 0 24 24" className="size-6"><path d="M12 1a11 11 0 1 1-5.500 20.500L1 23l1.500-5.500A11 11 0 0 1 12 1z" fill="#fff" /><circle cx="12" cy="12" r="9" fill="#25c853" /><path d="M8.500 7.500c1-1 1.700-.5 2.200 1.500l-.8 1.200c.8 1.700 2 2.800 3.800 3.500l1.200-1.300 2.300 1.200c.2 1.800-1.500 3-3.300 2.500C10.500 15 7.500 11.500 7.500 9.500c0-.8.300-1.500 1-2z" fill="#fff" /></svg>
        </TaskIcon>
      </div>
      <div className="ml-auto flex shrink-0 items-center">
        <Btn label="Mostrar iconos ocultos" className="w-4"><svg viewBox="0 0 10 7" className="h-[7px] w-2.5" fill="none" stroke="#fff" strokeWidth="1.500"><path d="M1 5.500 5 1.500 9 5.500" /></svg></Btn>
        <Btn label="OneDrive" className="ml-3.5 w-4"><svg viewBox="0 0 16 14" className="h-3.5 w-4"><path d="M3.500 9.500a3 3 0 0 1 0-6C5.500-.5 10-.5 11 3c3 0 4 2 3.500 4z" fill="#c9ccd0" /><circle cx="11" cy="9" r="4.500" fill="#2b7fc7" /><path d="M8.500 8.500h4.500l-1.500-1.500M13.500 10H9l1.500 1.500" stroke="#fff" fill="none" /></svg></Btn>
        <Btn label="Actualizaciones" className="ml-3.5 w-4"><svg viewBox="0 0 16 16" className="size-4" fill="none" stroke="#fff" strokeWidth="1.300"><path d="M1.500 6.500A6.500 6.500 0 0 1 14 5M14 1v4h-4M6 14.500a6.500 6.500 0 0 1-4.500-4M1.500 14.500v-4h4" /><circle cx="12" cy="11.500" r="4" fill="#f59a0c" stroke="none" /></svg></Btn>
        <Btn label="Wifi" className="ml-3.5 w-4"><Wifi size={16} strokeWidth={1.8} /></Btn>
        <Btn label="Volumen" className="ml-1.5 w-4"><Volume2 size={15} strokeWidth={1.6} /></Btn>
        <Btn label="Batería" className="ml-2 w-4"><svg viewBox="0 0 16 10" className="h-2.5 w-4" fill="none" stroke="#fff" strokeWidth="1.200"><rect x=".6" y=".6" width="12.500" height="8.800" rx="1.500" /><path d="M15 3.500v3" strokeWidth="1.500" /><path d="M2.500 2.500h4v5h-4z" fill="#fff" stroke="none" /></svg></Btn>
        <div className="ml-2 w-16 whitespace-nowrap text-right text-[11px] leading-[15px]">
          <div>06:28 p. m.</div>
          <div>13/05/2023</div>
        </div>
        <span className="ml-2 mr-[19px] flex size-[14px] items-center justify-center rounded-full bg-[#3bdc3b] text-[9px] leading-none text-black">2</span>
      </div>
    </footer>
  );
}

export default function App() {
  return (
    <div className="flex min-h-screen flex-col overflow-hidden bg-[#f0f0f0] font-['Open_Sans','Noto_Sans',sans-serif]">
      <TitleBar />
      <RibbonTabs />
      <Ribbon />
      <FormulaBar />
      <Sheet />
      <SheetTabs />
      <StatusBar />
      <Taskbar />
    </div>
  );
}
